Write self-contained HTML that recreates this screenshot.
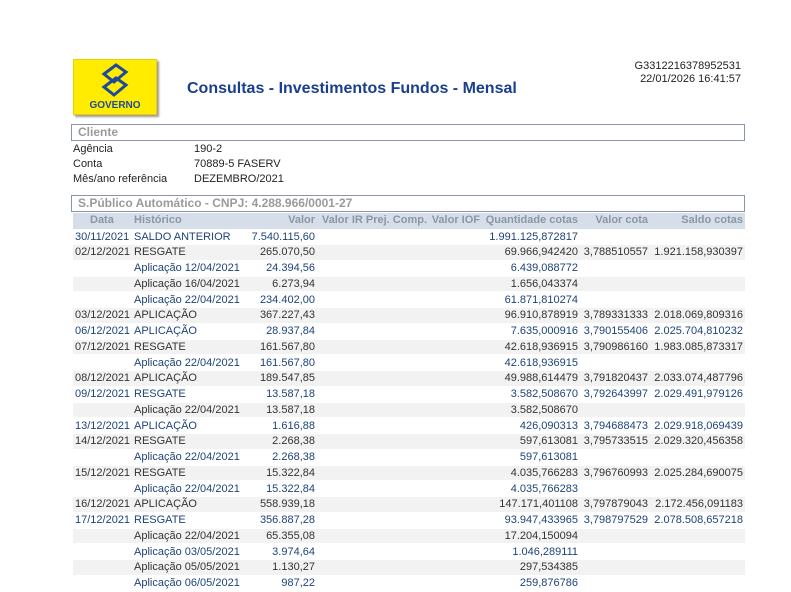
<!DOCTYPE html>
<html><head><meta charset="utf-8"><style>
body{margin:0;width:791px;height:584px;overflow:hidden;background:#fff;font-family:"Liberation Sans",sans-serif;font-size:11px;color:#222;position:relative}
.a{position:absolute;white-space:nowrap}
.logo{left:73px;top:59px;width:82px;height:54px;background:#ffec00;box-shadow:2px 2px 2px #999;border:1px solid #e8d000}
.box{left:71px;width:666px;height:15px;border:1px solid #8a96a6;color:#9a9a9a;font-weight:bold;font-size:12px;line-height:15px;padding-left:6px;box-sizing:content-box}
.row{position:absolute;left:73px;width:672px;height:15.7px;line-height:15.7px}
.row span{position:absolute;white-space:nowrap}
.g{background:#f2f2f2;color:#333}
.w{background:#fff;color:#1d4378}
.h{background:#d6dfe9;color:#8a96a6;font-weight:bold}
.c1{right:615px}.c2{left:61px}.c3{right:430px}.c4{right:318px}.c5{right:265px}.c6{right:167px}.c7{right:97px}.c8{right:2px}
</style></head><body>
<div class="a" style="right:50px;top:60px;text-align:right;line-height:13px">G3312216378952531<br>22/01/2026 16:41:57</div>
<div class="a logo">
<svg width="82" height="54" viewBox="0 0 82 54"><g fill="none" stroke="#1d4a9a" stroke-width="3"><path d="M30 14 L42 5 L52 12 L40 22 Z"/><path d="M30 27 L42 18 L52 25 L40 35 Z"/></g><text x="41" y="48" text-anchor="middle" font-family="Liberation Sans" font-weight="bold" font-size="10" fill="#1d4a9a">GOVERNO</text></svg>
</div>
<div class="a" style="left:187px;top:80px;font-size:16px;font-weight:bold;color:#1a3f8f">Consultas - Investimentos Fundos - Mensal</div>
<div class="a box" style="top:124px">Cliente</div>
<div class="a" style="left:73px;top:142px;line-height:15px">Agência<br>Conta<br>Mês/ano referência</div>
<div class="a" style="left:194px;top:142px;line-height:15px">190-2<br>70889-5 FASERV<br>DEZEMBRO/2021</div>
<div class="a box" style="top:195px">S.Público Automático - CNPJ: 4.288.966/0001-27</div>
<div class="row h" style="top:213px"><span style="left:17px">Data</span><span class="c2">Histórico</span><span class="c3">Valor</span><span class="c4">Valor IR Prej. Comp.</span><span class="c5">Valor IOF</span><span class="c6">Quantidade cotas</span><span class="c7">Valor cota</span><span class="c8">Saldo cotas</span></div>
<div id="t"></div>
<script>
var d=[["30/11/2021","SALDO ANTERIOR","7.540.115,60","1.991.125,872817","",""],
["02/12/2021","RESGATE","265.070,50","69.966,942420","3,788510557","1.921.158,930397"],
["","Aplicação 12/04/2021","24.394,56","6.439,088772","",""],
["","Aplicação 16/04/2021","6.273,94","1.656,043374","",""],
["","Aplicação 22/04/2021","234.402,00","61.871,810274","",""],
["03/12/2021","APLICAÇÃO","367.227,43","96.910,878919","3,789331333","2.018.069,809316"],
["06/12/2021","APLICAÇÃO","28.937,84","7.635,000916","3,790155406","2.025.704,810232"],
["07/12/2021","RESGATE","161.567,80","42.618,936915","3,790986160","1.983.085,873317"],
["","Aplicação 22/04/2021","161.567,80","42.618,936915","",""],
["08/12/2021","APLICAÇÃO","189.547,85","49.988,614479","3,791820437","2.033.074,487796"],
["09/12/2021","RESGATE","13.587,18","3.582,508670","3,792643997","2.029.491,979126"],
["","Aplicação 22/04/2021","13.587,18","3.582,508670","",""],
["13/12/2021","APLICAÇÃO","1.616,88","426,090313","3,794688473","2.029.918,069439"],
["14/12/2021","RESGATE","2.268,38","597,613081","3,795733515","2.029.320,456358"],
["","Aplicação 22/04/2021","2.268,38","597,613081","",""],
["15/12/2021","RESGATE","15.322,84","4.035,766283","3,796760993","2.025.284,690075"],
["","Aplicação 22/04/2021","15.322,84","4.035,766283","",""],
["16/12/2021","APLICAÇÃO","558.939,18","147.171,401108","3,797879043","2.172.456,091183"],
["17/12/2021","RESGATE","356.887,28","93.947,433965","3,798797529","2.078.508,657218"],
["","Aplicação 22/04/2021","65.355,08","17.204,150094","",""],
["","Aplicação 03/05/2021","3.974,64","1.046,289111","",""],
["","Aplicação 05/05/2021","1.130,27","297,534385","",""],
["","Aplicação 06/05/2021","987,22","259,876786","",""]];
var h="";
d.forEach(function(r,i){var c=i%2?"g":"w";
h+='<div class="row '+c+'" style="top:'+(228.5+i*15.75)+'px;border-top:1px solid #fff;box-sizing:border-box"><span style="left:2px">'+r[0]+'</span><span class="c2">'+r[1]+'</span><span class="c3">'+r[2]+'</span><span class="c6">'+r[3]+'</span><span class="c7">'+r[4]+'</span><span class="c8">'+r[5]+'</span></div>';});
document.getElementById("t").innerHTML=h;
</script>
</body></html>
